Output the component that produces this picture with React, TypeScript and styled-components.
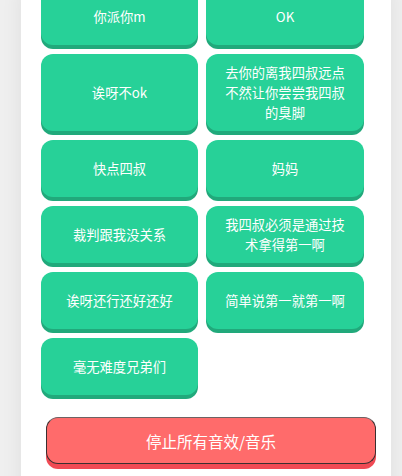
import React from "react";
import styled, { createGlobalStyle } from "styled-components";

const Global = createGlobalStyle`
  html, body {
    margin: 0;
    padding: 0;
    background: #efefef;
    overflow: hidden;
  }
  body {
    font-family: "Noto Sans CJK SC", "Noto Sans", sans-serif;
  }
`;

const Page = styled.div`
  width: 402px;
  height: 476px;
  overflow: hidden;
  display: flex;
  justify-content: flex-start;
`;

const Card = styled.div`
  margin-left: 21px;
  width: 370px;
  min-height: 520px;
  background: #ffffff;
  box-shadow: 0 0 20px rgba(0, 0, 0, 0.07);
  padding: 0 27px 0 20px;
  box-sizing: border-box;
  margin-top: -12px;
  display: flex;
  flex-direction: column;
`;

const Grid = styled.div`
  display: grid;
  grid-template-columns: 157px 158px;
  column-gap: 8px;
  row-gap: 9px;
  align-items: stretch;
`;

const SoundButton = styled.button`
  min-height: 57px;
  box-sizing: border-box;
  padding: 8.5px 14px;
  border: none;
  border-radius: 12px;
  background: #27d198;
  box-shadow: 0 4px 0 #21a97b;
  color: #ffffff;
  font-family: "Noto Sans CJK SC", "Noto Sans", sans-serif;
  font-size: 13.3px;
  line-height: 20px;
  text-align: center;
  display: flex;
  align-items: center;
  justify-content: center;
  cursor: pointer;
`;

const StopButton = styled.button`
  margin: 22px 0 0 5px;
  width: 330px;
  height: 47px;
  box-sizing: border-box;
  border: 1.5px solid #3a2f30;
  border-top-color: #6e6263;
  border-radius: 12px;
  background: #ff6b6b;
  box-shadow: 0 5px 0 #f04a54;
  color: #ffffff;
  font-family: "Noto Sans CJK SC", "Noto Sans", sans-serif;
  font-size: 15.5px;
  cursor: pointer;
`;

const sounds = [
  "你派你m",
  "OK",
  "诶呀不ok",
  "去你的离我四叔远点不然让你尝尝我四叔的臭脚",
  "快点四叔",
  "妈妈",
  "裁判跟我没关系",
  "我四叔必须是通过技术拿得第一啊",
  "诶呀还行还好还好",
  "简单说第一就第一啊",
  "毫无难度兄弟们",
];

export default function App() {
  return (
    <>
      <Global />
      <Page>
        <Card>
          <Grid>
            {sounds.map((s) => (
              <SoundButton key={s}>{s}</SoundButton>
            ))}
          </Grid>
          <StopButton>停止所有音效/音乐</StopButton>
        </Card>
      </Page>
    </>
  );
}
